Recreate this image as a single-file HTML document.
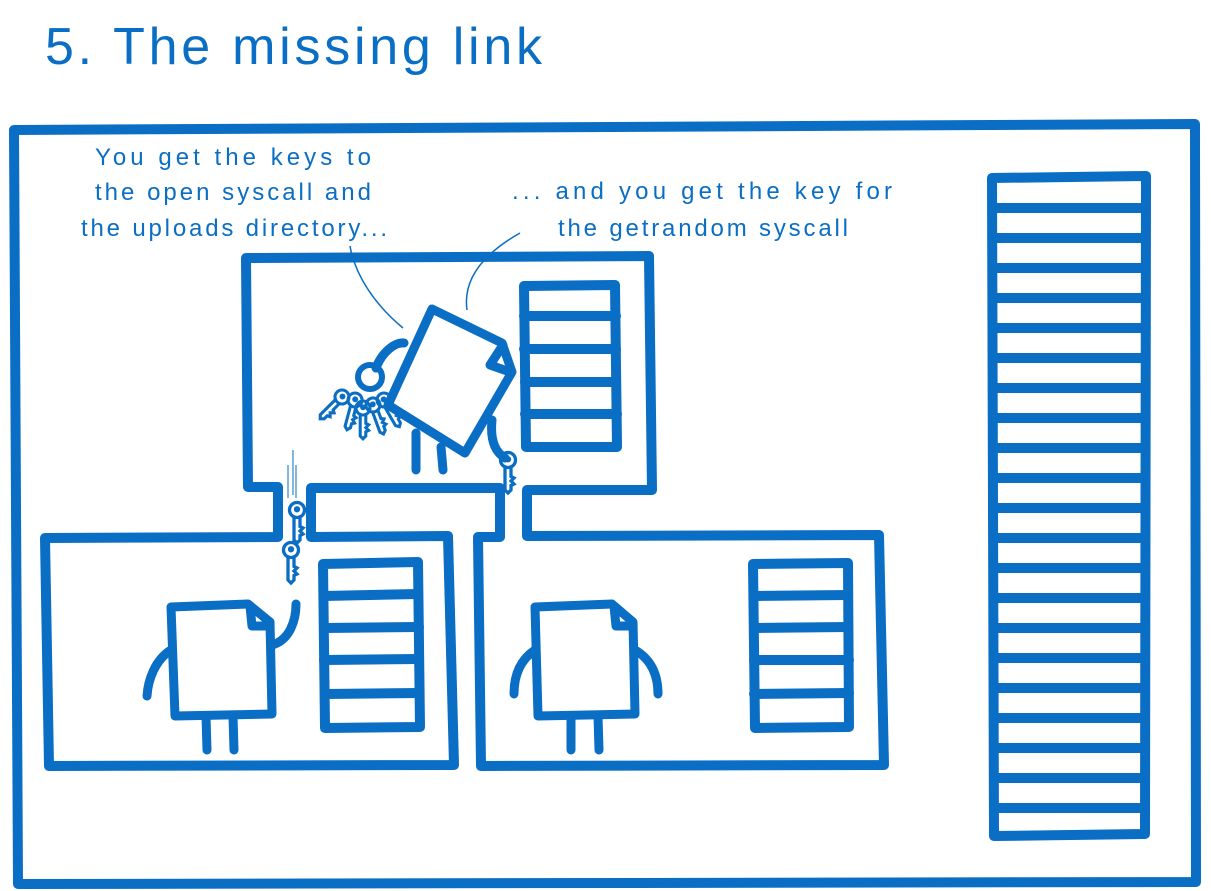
<!DOCTYPE html>
<html><head><meta charset="utf-8"><style>
html,body{margin:0;padding:0;background:#fff;}
svg{display:block;}
text{font-family:"Liberation Sans",sans-serif;fill:#0a6ec4;}
</style></head><body>
<svg width="1211" height="891" viewBox="0 0 1211 891" xmlns="http://www.w3.org/2000/svg">
<defs>
<g id="key" fill="none" stroke="#0a6ec4" stroke-width="2.2" stroke-linecap="round">
<circle cx="0" cy="0" r="5"/><circle cx="0" cy="-0.5" r="1" fill="#0a6ec4"/>
<path d="M-2,4.5 L-2,20 L0,22 L2,20 L2,17 L4,16 L2,14 L4,12 L2,11 L2,4.5"/>
</g>
</defs>
<text x="45" y="64" font-size="52" textLength="497" lengthAdjust="spacing">5. The missing link</text>

<g fill="none" stroke="#0a6ec4" stroke-width="10" stroke-linejoin="round" stroke-linecap="round">
<path d="M14,130 L1195,124 L1196,882 L18,884 Z"/>
<path d="M278,537 L278,487 L248,487 L246,258 L649,256 L652,490 L527,490 L527,536 L879,535 L884,765 L481,766 L478,537 L500,537 L500,488 L311,488 L311,537 L448,536 L454,765 L49,766 L45,538 Z"/>
<path d="M524,286 L615,285 L617,447 L526,447 Z"/>
<path d="M524,316 L616,316 M524,349 L616,349 M525,382 L616,382 M525,414 L617,414"/>
<path d="M323,564 L418,562 L420,727 L325,728 Z"/>
<path d="M324,596 L418,594 M324,628 L419,627 M324,660 L419,659 M325,694 L419,693"/>
<path d="M753,564 L848,563 L849,727 L755,728 Z"/>
<path d="M754,596 L848,595 M754,628 L848,627 M754,660 L849,660 M754,694 L849,693"/>
<path d="M992,178 L1146,176 L1145,834 L994,836 Z"/>
<path d="M994,208 L1144,208 M994,238 L1144,238 M994,268 L1144,268 M994,298 L1144,298 M994,328 L1144,328 M994,358 L1144,358 M994,388 L1144,388 M994,418 L1144,418 M994,448 L1144,448 M994,478 L1144,478 M994,508 L1144,508 M994,538 L1144,538 M994,568 L1144,568 M994,598 L1144,598 M994,628 L1144,628 M994,658 L1144,658 M994,688 L1144,688 M994,718 L1144,718 M994,748 L1144,748 M994,778 L1144,778 M994,808 L1144,808"/>
</g>

<g fill="none" stroke="#0a6ec4" stroke-width="9" stroke-linejoin="round" stroke-linecap="round">
<path d="M171,607 L248,604 L270,622 L272,714 L175,716 Z"/>
<path d="M250,606 L252,626 L270,626"/>
<path d="M171,650 C155,660 148,680 147,696"/>
<path d="M272,645 C290,640 296,620 296,604"/>
<path d="M206,716 L207,750 M233,716 L234,750"/>
<path d="M535,607 L612,604 L633,622 L635,714 L538,716 Z"/>
<path d="M614,606 L616,626 L633,626"/>
<path d="M535,650 C520,660 514,676 514,694"/>
<path d="M635,650 C652,660 658,676 658,694"/>
<path d="M571,716 L571,750 M598,716 L599,750"/>
<path d="M432,309 L502,343 L512,372 L465,453 L388,405 Z"/>
<path d="M503,345 L490,365 L510,372"/>
<path d="M416,433 L416,470 M441,447 L443,470"/>
<path d="M492,420 C490,440 495,452 505,458"/>
<path d="M404,343 C395,342 382,352 376,368"/>
</g>
<circle cx="370" cy="377" r="12" fill="none" stroke="#0a6ec4" stroke-width="6"/>
<g transform="translate(342,397) rotate(45) scale(1.4)"><use href="#key"/></g>
<g transform="translate(355,400) rotate(15) scale(1.4)"><use href="#key"/></g>
<g transform="translate(363,408) rotate(0) scale(1.4)"><use href="#key"/></g>
<g transform="translate(373,405) rotate(-20) scale(1.4)"><use href="#key"/></g>
<g transform="translate(384,400) rotate(-30) scale(1.4)"><use href="#key"/></g>
<g transform="translate(508,460) scale(1.5)"><use href="#key"/></g>
<g transform="translate(297,510) scale(1.5)"><use href="#key"/></g>
<g transform="translate(291,550) scale(1.5)"><use href="#key"/></g>
<g stroke="#0a6ec4" stroke-width="1" fill="none">
<path d="M288,465 L288,498 M293,450 L293,495 M296,465 L296,498"/>
<path d="M350,246 C355,275 375,305 403,328" stroke-width="1.5"/>
<path d="M520,233 C490,250 462,275 467,310" stroke-width="1.5"/>
</g>

<g font-size="24">
<text x="95" y="165" textLength="276" lengthAdjust="spacing">You get the keys to</text>
<text x="95" y="200" textLength="276" lengthAdjust="spacing">the open syscall and</text>
<text x="81" y="236" textLength="306" lengthAdjust="spacing">the uploads directory...</text>
<text x="512" y="199" textLength="380" lengthAdjust="spacing">... and you get the key for</text>
<text x="558" y="236" textLength="290" lengthAdjust="spacing">the getrandom syscall</text>
</g>
</svg>
</body></html>
